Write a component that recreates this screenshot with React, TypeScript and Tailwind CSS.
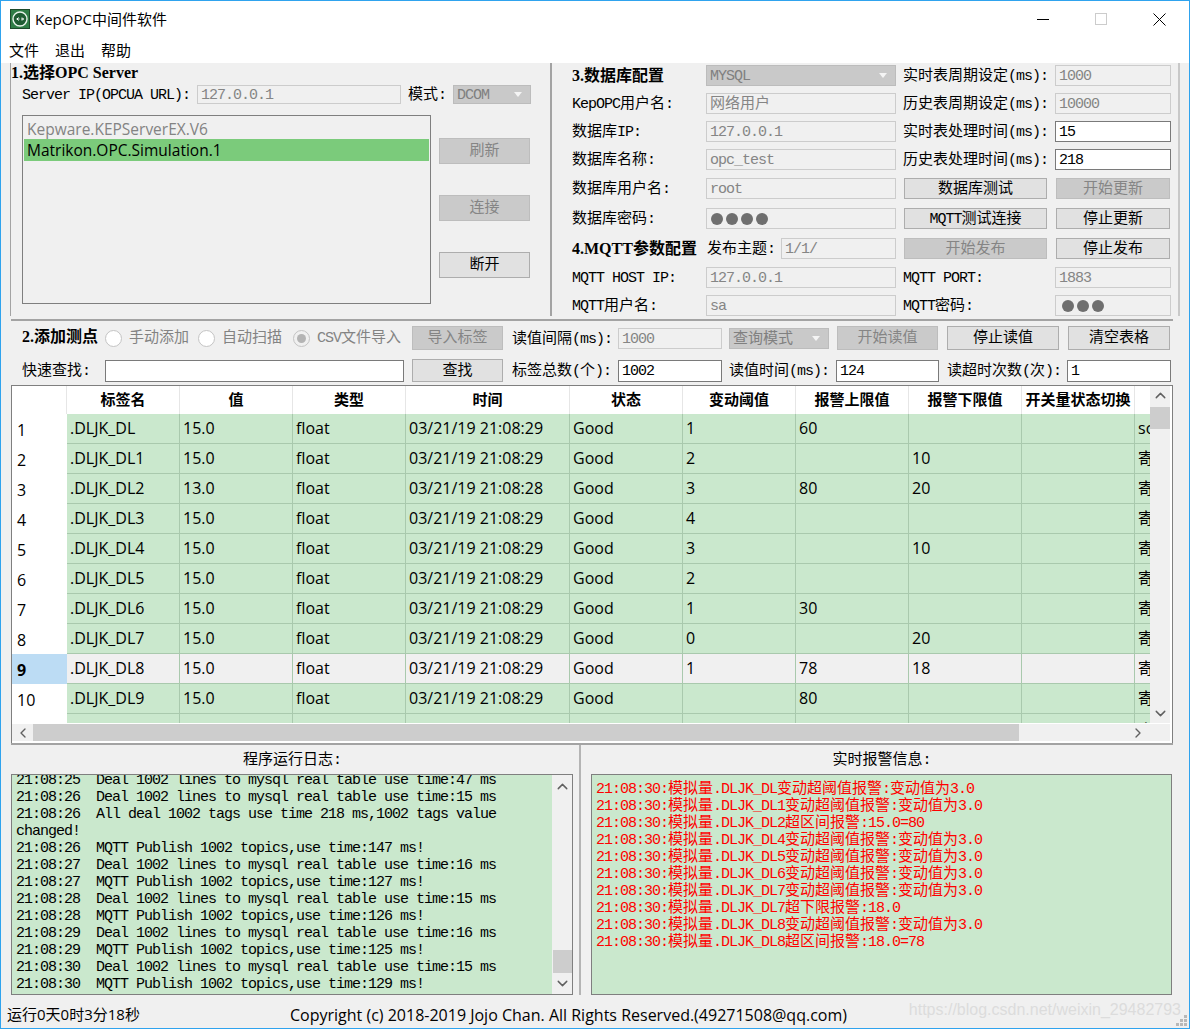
import type { ReactNode } from "react";
import { ChevronDown, ChevronLeft, ChevronRight, ChevronUp } from "lucide-react";

const ui = "font-['Open_Sans','Noto_Sans_CJK_SC',sans-serif]";
const sim = "font-['Liberation_Mono','Noto_Sans_CJK_SC',monospace]";
const heading = "font-['Liberation_Serif','Noto_Sans_CJK_SC',serif] font-bold";

// SimSun look: half width latin at 8px next to full size CJK, so the ascii runs get their own tracking
function Sim({ text }: { text: string }) {
  return (
    <>
      {text.split(/([\u0000-\u00ff]+)/).map((part, i) =>
        /^[\u0000-\u00ff]+$/.test(part) ? (
          <span key={i} className="text-[15px] tracking-[-1px]">
            {part}
          </span>
        ) : (
          part
        ),
      )}
    </>
  );
}

function Label({ text, className = "", muted }: { text: string; className?: string; muted?: boolean }) {
  return (
    <span
      className={`flex shrink-0 items-center whitespace-pre pt-[4px] text-[15px] ${sim} ${muted ? "text-[#838383]" : "text-black"} ${className}`}
    >
      <span>
        <Sim text={text} />
      </span>
    </span>
  );
}

function Field({ text, className = "", active, dots }: { text?: string; className?: string; active?: boolean; dots?: number }) {
  return (
    <div
      className={`flex shrink-0 items-center overflow-hidden whitespace-pre border px-[3px] text-[15px] ${sim} ${
        active ? "border-[#7a7a7a] bg-white text-black" : "border-[#cccccc] bg-[#f0f0f0] text-[#858585]"
      } ${className}`}
    >
      {dots ? (
        <span className="flex gap-[3px] pl-[1px]">
          {Array.from({ length: dots }, (_, i) => (
            <i key={i} className="size-3 rounded-full bg-[#6f6f6f]" />
          ))}
        </span>
      ) : (
        <span className="translate-y-[2px]">
          <Sim text={text ?? ""} />
        </span>
      )}
    </div>
  );
}

function Combo({ text, className = "" }: { text: string; className?: string }) {
  return (
    <div
      className={`flex shrink-0 items-center justify-between border border-[#bcbcbc] bg-[#c9c9c9] pl-[3px] pr-[8px] text-[15px] text-[#808080] ${sim} ${className}`}
    >
      <span className="translate-y-[2px]">
        <Sim text={text} />
      </span>
      <i className="size-0 border-x-[4px] border-t-[5px] border-x-transparent border-t-[#f4f4f4]" />
    </div>
  );
}

function Btn({ text, className = "", off }: { text: string; className?: string; off?: boolean }) {
  return (
    <button
      type="button"
      className={`flex shrink-0 items-center justify-center border pt-[3px] text-[15px] ${sim} ${
        off ? "border-[#bdbdbd] bg-[#cacaca] text-[#858585]" : "border-[#adadad] bg-[#e1e1e1] text-black"
      } ${className}`}
    >
      <span>
        <Sim text={text} />
      </span>
    </button>
  );
}

function Radio({ text, className = "", checked }: { text: string; className?: string; checked?: boolean }) {
  return (
    <span className={`flex shrink-0 items-center gap-[7px] ${className}`}>
      <i
        className={`grid size-[17px] place-items-center rounded-full border border-[#c4c4c4] ${checked ? "bg-[#f0f0f0]" : "bg-white"}`}
      >
        {checked && <i className="size-[9px] rounded-full bg-[#b4b4b4]" />}
      </i>
      <Label text={text} muted className="!pt-[2px]" />
    </span>
  );
}

function ConfigRow({ children, className = "" }: { children: ReactNode; className?: string }) {
  return <div className={`flex h-[21px] shrink-0 ${className}`}>{children}</div>;
}

const widths = [55, 113, 113, 113, 164, 113, 113, 113, 113, 113, 113];
const headers = ["", "标签名", "值", "类型", "时间", "状态", "变动阈值", "报警上限值", "报警下限值", "开关量状态切换", ""];
const rows = [
  ["1", ".DLJK_DL", "15.0", "03/21/19 21:08:29", "1", "60", "", "source"],
  ["2", ".DLJK_DL1", "15.0", "03/21/19 21:08:29", "2", "", "10", "寄存器"],
  ["3", ".DLJK_DL2", "13.0", "03/21/19 21:08:28", "3", "80", "20", "寄存器"],
  ["4", ".DLJK_DL3", "15.0", "03/21/19 21:08:29", "4", "", "", "寄存器"],
  ["5", ".DLJK_DL4", "15.0", "03/21/19 21:08:29", "3", "", "10", "寄存器"],
  ["6", ".DLJK_DL5", "15.0", "03/21/19 21:08:29", "2", "", "", "寄存器"],
  ["7", ".DLJK_DL6", "15.0", "03/21/19 21:08:29", "1", "30", "", "寄存器"],
  ["8", ".DLJK_DL7", "15.0", "03/21/19 21:08:29", "0", "", "20", "寄存器"],
  ["9", ".DLJK_DL8", "15.0", "03/21/19 21:08:29", "1", "78", "18", "寄存器"],
  ["10", ".DLJK_DL9", "15.0", "03/21/19 21:08:29", "", "80", "", "寄存器"],
  ["11", ".DLJK_DL10", "15.0", "03/21/19 21:08:29", "", "", "", "寄存器"],
];

const logLines = [
  "21:08:25  Deal 1002 lines to mysql real table use time:47 ms",
  "21:08:26  Deal 1002 lines to mysql real table use time:15 ms",
  "21:08:26  All deal 1002 tags use time 218 ms,1002 tags value",
  "changed!",
  "21:08:26  MQTT Publish 1002 topics,use time:147 ms!",
  "21:08:27  Deal 1002 lines to mysql real table use time:16 ms",
  "21:08:27  MQTT Publish 1002 topics,use time:127 ms!",
  "21:08:28  Deal 1002 lines to mysql real table use time:15 ms",
  "21:08:28  MQTT Publish 1002 topics,use time:126 ms!",
  "21:08:29  Deal 1002 lines to mysql real table use time:16 ms",
  "21:08:29  MQTT Publish 1002 topics,use time:125 ms!",
  "21:08:30  Deal 1002 lines to mysql real table use time:15 ms",
  "21:08:30  MQTT Publish 1002 topics,use time:129 ms!",
];

const alarms = [
  "21:08:30:模拟量.DLJK_DL变动超阈值报警:变动值为3.0",
  "21:08:30:模拟量.DLJK_DL1变动超阈值报警:变动值为3.0",
  "21:08:30:模拟量.DLJK_DL2超区间报警:15.0=80",
  "21:08:30:模拟量.DLJK_DL4变动超阈值报警:变动值为3.0",
  "21:08:30:模拟量.DLJK_DL5变动超阈值报警:变动值为3.0",
  "21:08:30:模拟量.DLJK_DL6变动超阈值报警:变动值为3.0",
  "21:08:30:模拟量.DLJK_DL7变动超阈值报警:变动值为3.0",
  "21:08:30:模拟量.DLJK_DL7超下限报警:18.0",
  "21:08:30:模拟量.DLJK_DL8变动超阈值报警:变动值为3.0",
  "21:08:30:模拟量.DLJK_DL8超区间报警:18.0=78",
];

function AppIcon() {
  return (
    <svg width="20" height="20" viewBox="0 0 20 20" className="shrink-0">
      <rect x="0.5" y="0.5" width="19" height="19" fill="#2f7d46" stroke="#1d4a2b" />
      <circle cx="10" cy="10" r="7" fill="#1f5c33" stroke="#e8f2ea" strokeWidth="1.4" />
      <path d="M6.5 10h3M8.5 8.5 7 10l1.5 1.5M13.5 10h-2.5M12 8.5l1.5 1.5-1.5 1.5" fill="none" stroke="#fff" strokeWidth="1" />
    </svg>
  );
}

function Grip() {
  return (
    <span className="absolute bottom-[2px] right-[2px] grid grid-cols-3 gap-px">
      {[0, 0, 1, 0, 1, 1, 1, 1, 1].map((on, i) => (
        <i key={i} className={`size-[3px] ${on ? "bg-[#b8b8b8]" : ""}`} />
      ))}
    </span>
  );
}

export default function App() {
  return (
    <div className={`relative flex h-[1029px] w-[1190px] flex-col overflow-hidden border border-[#2fa3ee] bg-[#f0f0f0] ${ui}`}>
      {/* title bar */}
      <div className="flex h-[31px] shrink-0 items-center bg-white pl-[9px] pt-[5px]">
        <AppIcon />
        <span className="ml-[5px] text-[15px] text-black">KepOPC中间件软件</span>
        <div className="ml-auto flex">
          <span className="grid w-[58px] place-items-center">
            <i className="h-px w-3 bg-black" />
          </span>
          <span className="grid w-[58px] place-items-center">
            <i className="size-3 border border-[#cccccc]" />
          </span>
          <span className="grid w-[59px] place-items-center">
            <svg width="13" height="13" viewBox="0 0 13 13">
              <path d="M.5.5l12 12M12.5.5l-12 12" stroke="#000" strokeWidth="1" />
            </svg>
          </span>
        </div>
      </div>

      {/* menu */}
      <div className="flex h-[31px] shrink-0 items-center gap-4 bg-white pl-[8px] pt-[6px] text-[15px] text-black">
        <span>文件</span>
        <span>退出</span>
        <span>帮助</span>
      </div>

      {/* OPC server + database / mqtt config */}
      <div className="flex h-[253px] shrink-0 pl-[9px]">
        <div className="flex w-[540px] shrink-0 flex-col border-l border-[#a3a3a3]">
          <div className={`h-[18px] pt-px text-[16px] leading-[18px] text-black ${heading}`}>1.选择OPC Server</div>
          <div className="ml-[11px] mt-[4px] flex h-[19px] shrink-0">
            <Label text="Server IP(OPCUA URL):" className="w-[175px]" />
            <Field text="127.0.0.1" className="w-[204px]" />
            <Label text="模式:" className="ml-[7px] w-[45px]" />
            <Combo text="DCOM" className="w-[78px]" />
          </div>
          <div className="ml-[11px] mt-[11px] flex">
            <div className="flex h-[189px] w-[409px] shrink-0 flex-col border border-[#7f7f7f] px-px pt-[2px] text-[15.5px]">
              <div className="flex h-[21px] items-center pl-[3px] pt-[2px] text-[#838383]">Kepware.KEPServerEX.V6</div>
              <div className="flex h-[22px] items-center bg-[#7bcb7b] pl-[3px] pt-[2px] text-black">Matrikon.OPC.Simulation.1</div>
            </div>
            <div className="ml-[8px] flex flex-col gap-[31px] pt-[23px]">
              <Btn text="刷新" off className="h-[26px] w-[91px]" />
              <Btn text="连接" off className="h-[26px] w-[91px]" />
              <Btn text="断开" className="h-[26px] w-[91px]" />
            </div>
          </div>
        </div>

        <div className="flex w-[630px] shrink-0 flex-col border-x-2 border-[#a3a3a3] border-r-[#c8c8c8] pl-[20px] pt-[2px]">
          <ConfigRow>
            <span className={`flex w-[134px] shrink-0 items-center text-[16px] text-black ${heading}`}>3.数据库配置</span>
            <Combo text="MYSQL" className="w-[190px]" />
            <Label text="实时表周期设定(ms):" className="ml-[7px] w-[152px]" />
            <Field text="1000" className="w-[116px]" />
          </ConfigRow>
          <ConfigRow className="mt-[7px]">
            <Label text="KepOPC用户名:" className="w-[134px]" />
            <Field text="网络用户" className="w-[190px]" />
            <Label text="历史表周期设定(ms):" className="ml-[7px] w-[152px]" />
            <Field text="10000" className="w-[116px]" />
          </ConfigRow>
          <ConfigRow className="mt-[7px]">
            <Label text="数据库IP:" className="w-[134px]" />
            <Field text="127.0.0.1" className="w-[190px]" />
            <Label text="实时表处理时间(ms):" className="ml-[7px] w-[152px]" />
            <Field text="15" active className="w-[116px]" />
          </ConfigRow>
          <ConfigRow className="mt-[7px]">
            <Label text="数据库名称:" className="w-[134px]" />
            <Field text="opc_test" className="w-[190px]" />
            <Label text="历史表处理时间(ms):" className="ml-[7px] w-[152px]" />
            <Field text="218" active className="w-[116px]" />
          </ConfigRow>
          <ConfigRow className="mt-[8px]">
            <Label text="数据库用户名:" className="w-[134px]" />
            <Field text="root" className="w-[190px]" />
            <Btn text="数据库测试" className="ml-[8px] w-[143px]" />
            <Btn text="开始更新" off className="ml-[9px] w-[114px]" />
          </ConfigRow>
          <ConfigRow className="mt-[9px]">
            <Label text="数据库密码:" className="w-[134px]" />
            <Field dots={4} className="w-[190px]" />
            <Btn text="MQTT测试连接" className="ml-[8px] w-[143px]" />
            <Btn text="停止更新" className="ml-[9px] w-[114px]" />
          </ConfigRow>
          <ConfigRow className="mt-[9px]">
            <span className={`flex w-[135px] shrink-0 items-center whitespace-nowrap text-[16px] text-black ${heading}`}>4.MQTT参数配置</span>
            <Label text="发布主题:" className="w-[74px]" />
            <Field text="1/1/" className="w-[115px]" />
            <Btn text="开始发布" off className="ml-[8px] w-[143px]" />
            <Btn text="停止发布" className="ml-[9px] w-[114px]" />
          </ConfigRow>
          <ConfigRow className="mt-[8px]">
            <Label text="MQTT HOST IP:" className="w-[134px]" />
            <Field text="127.0.0.1" className="w-[190px]" />
            <Label text="MQTT PORT:" className="ml-[7px] w-[152px]" />
            <Field text="1883" className="w-[116px]" />
          </ConfigRow>
          <ConfigRow className="mt-[7px]">
            <Label text="MQTT用户名:" className="w-[134px]" />
            <Field text="sa" className="w-[190px]" />
            <Label text="MQTT密码:" className="ml-[7px] w-[152px]" />
            <Field dots={3} className="w-[116px] !pl-[5px]" />
          </ConfigRow>
        </div>
      </div>

      <div className="ml-[10px] mt-[3px] h-[2px] w-[1162px] shrink-0 bg-[#a3a3a3]" />

      {/* add tags + table */}
      <div className="ml-[10px] flex w-[1162px] shrink-0 flex-col">
        <div className="mt-[5px] flex h-[24px] items-center pl-[11px]">
          <span className={`w-[83px] shrink-0 -translate-y-px text-[16px] text-black ${heading}`}>2.添加测点</span>
          <Radio text="手动添加" className="w-[93px]" />
          <Radio text="自动扫描" className="w-[95px]" />
          <Radio text="CSV文件导入" checked className="w-[119px]" />
          <Btn text="导入标签" off className="h-[24px] w-[91px]" />
          <Label text="读值间隔(ms):" className="ml-[9px] w-[106px]" />
          <Field text="1000" className="h-[21px] w-[104px]" />
          <Combo text="查询模式" className="ml-[7px] h-[21px] w-[100px]" />
          <Btn text="开始读值" off className="ml-[8px] h-[24px] w-[101px]" />
          <Btn text="停止读值" className="ml-[9px] h-[24px] w-[112px]" />
          <Btn text="清空表格" className="ml-[9px] h-[24px] w-[102px]" />
        </div>
        <div className="mt-[9px] flex h-[23px] items-center pl-[11px]">
          <Label text="快速查找:" className="w-[83px]" />
          <Field className="h-[22px] w-[299px]" active />
          <Btn text="查找" className="ml-[8px] h-[23px] w-[91px]" />
          <Label text="标签总数(个):" className="ml-[9px] w-[106px]" />
          <Field text="1002" active className="h-[22px] w-[104px]" />
          <Label text="读值时间(ms):" className="ml-[7px] w-[107px]" />
          <Field text="124" active className="h-[22px] w-[103px]" />
          <Label text="读超时次数(次):" className="ml-[8px] w-[120px]" />
          <Field text="1" active className="h-[22px] w-[104px]" />
        </div>

        <div className="mt-[3px] flex h-[358px] flex-col border-x border-t border-[#7f7f7f] bg-white">
          <div className="flex h-[337px] shrink-0">
            <div className="w-[1138px] shrink-0 overflow-hidden">
              <table className="w-[1236px] table-fixed border-separate border-spacing-0 text-[16px] text-black">
                <colgroup>
                  {widths.map((w, i) => (
                    <col key={i} style={{ width: w }} />
                  ))}
                </colgroup>
                <thead>
                  <tr className="h-[28px]">
                    {headers.map((h, i) => (
                      <th key={i} className="whitespace-nowrap border-r border-[#e6e6e6] bg-white p-0 pb-[2px] text-center text-[15px] font-bold">
                        {h}
                      </th>
                    ))}
                  </tr>
                </thead>
                <tbody>
                  {rows.map((r) => {
                    const selected = r[0] === "9";
                    const cells = [r[1], r[2], "float", r[3], "Good", r[4], r[5], r[6], "", r[7]];
                    return (
                      <tr key={r[0]} className="h-[30px]">
                        <td
                          className={`overflow-hidden p-0 pl-[5px] pt-[2px] ${selected ? "bg-[#bcdcf4] font-bold" : "bg-white"}`}
                        >
                          {r[0]}
                        </td>
                        {cells.map((c, i) => (
                          <td
                            key={i}
                            className={`overflow-hidden whitespace-nowrap border-b border-r border-[#a9c9ad] p-0 pl-[3px] ${
                              r[0] === "11" ? "pt-[3px]" : "pb-[2px]"
                            } ${selected ? "bg-[#f0f0f0]" : "bg-[#cae8cd]"}`}
                          >
                            {c}
                          </td>
                        ))}
                      </tr>
                    );
                  })}
                </tbody>
              </table>
            </div>
            <div className="flex h-[337px] w-[20px] shrink-0 flex-col items-center bg-[#f0f0f0] text-[#606060]">
              <ChevronUp size={17} strokeWidth={2} className="mt-[1px]" />
              <div className="mt-[3px] h-[22px] w-[20px] bg-[#cdcdcd]" />
              <ChevronDown size={17} strokeWidth={2} className="mb-[1px] mt-auto" />
            </div>
          </div>
          <div className="mt-px flex h-[17px] w-[1158px] shrink-0 items-center bg-[#f0f0f0] text-[#606060]">
            <span className="grid w-[21px] shrink-0 place-items-center">
              <ChevronLeft size={16} strokeWidth={2} />
            </span>
            <div className="h-full w-[986px] shrink-0 bg-[#cdcdcd]" />
            <span className="ml-[111px] grid w-[16px] place-items-center">
              <ChevronRight size={16} strokeWidth={2} />
            </span>
          </div>
        </div>
        <div className="h-[2px] shrink-0 bg-[#a3a3a3]" />
      </div>

      {/* log + alarms */}
      <div className="ml-[10px] flex h-[250px] shrink-0">
        <div className="flex w-[562px] shrink-0 flex-col">
          <div className={`flex h-[29px] shrink-0 items-center justify-center pt-[4px] text-[15px] text-black ${sim}`}>
            <span>
              <Sim text="程序运行日志:" />
            </span>
          </div>
          <div className="flex h-[221px] overflow-hidden border border-[#7f7f7f]">
            <div className={`-mt-[3px] flex-1 bg-[#cae8cd] pl-[4px] text-[15px] leading-[17px] tracking-[-1px] text-black ${sim}`}>
              {logLines.map((line, i) => (
                <div key={i} className="h-[17px] whitespace-pre">
                  {line}
                </div>
              ))}
            </div>
            <div className="flex w-[20px] shrink-0 flex-col items-center bg-[#f0f0f0] text-[#606060]">
              <ChevronUp size={17} strokeWidth={2} className="mt-[3px]" />
              <div className="mb-[2px] mt-auto h-[23px] w-[19px] bg-[#cdcdcd]" />
              <ChevronDown size={17} strokeWidth={2} className="mb-[2px]" />
            </div>
          </div>
        </div>
        <div className="ml-[6px] w-[2px] shrink-0 bg-[#b4b4b4]" />
        <div className="ml-[10px] flex w-[581px] shrink-0 flex-col">
          <div className={`flex h-[29px] shrink-0 items-center justify-center pt-[4px] text-[15px] text-black ${sim}`}>
            <span>
              <Sim text="实时报警信息:" />
            </span>
          </div>
          <div className={`h-[221px] overflow-hidden border border-[#7f7f7f] bg-[#cae8cd] pl-[4px] pt-[6px] text-[15px] leading-[17px] text-[#ff0000] ${sim}`}>
            {alarms.map((line, i) => (
              <div key={i} className="h-[17px] whitespace-pre">
                <Sim text={line} />
              </div>
            ))}
          </div>
        </div>
      </div>

      {/* status bar */}
      <div className="relative flex flex-1 items-center pl-[6px] pt-[6px] text-black">
        <span className="w-[283px] shrink-0 text-[15px]">运行0天0时3分18秒</span>
        <span className="whitespace-nowrap text-[16px]">Copyright (c) 2018-2019 Jojo Chan. All Rights Reserved.(49271508@qq.com)</span>
        <span className="absolute right-[8px] top-[3px] font-['Liberation_Sans',sans-serif] text-[16px] text-[#dcdcdc]">
          https://blog.csdn.net/weixin_29482793
        </span>
        <Grip />
      </div>
    </div>
  );
}
